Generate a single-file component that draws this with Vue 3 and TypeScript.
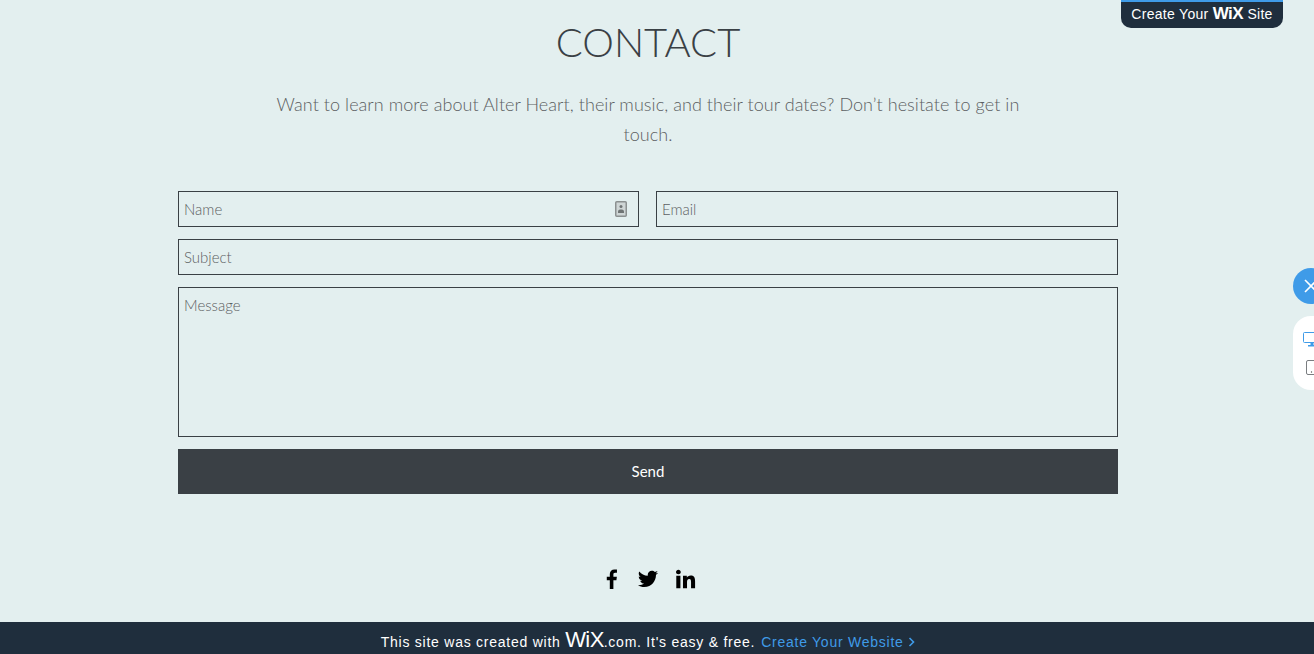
<script setup lang="ts">
const socials = ['facebook', 'twitter', 'linkedin']
</script>

<template>
  <div class="page">
    <a class="wix-tab">Create Your <b class="wix-word">WiX</b> Site</a>

    <div class="view-switch">
      <button class="close-btn" aria-label="Close">
        <svg width="18" height="18" viewBox="0 0 18 18" fill="none">
          <path d="M3 3L15 15M15 3L3 15" stroke="#fff" stroke-width="1.6" />
        </svg>
      </button>
      <div class="devices">
        <svg class="desktop" width="18" height="15" viewBox="0 0 18 15" fill="none">
          <rect x="0.5" y="0.5" width="17" height="10" rx="1" stroke="#3f9be8" />
          <path d="M5 14.5H13V13H10.5V11H7.5V13H5Z" fill="#3f9be8" />
        </svg>
        <svg class="tablet" width="14" height="15" viewBox="0 0 14 15" fill="none">
          <rect x="0.5" y="0.5" width="13" height="14" rx="1.5" stroke="#7a7d80" />
          <circle cx="5.5" cy="12" r="0.7" fill="#555" />
        </svg>
      </div>
    </div>

    <main class="content">
      <h1 class="title">CONTACT</h1>
      <p class="intro">
        Want to learn more about Alter Heart, their music, and their tour dates? Don’t hesitate to get in touch.
      </p>

      <form class="contact-form" @submit.prevent>
        <div class="row">
          <div class="name-wrap">
            <input class="field" type="text" placeholder="Name" />
            <svg class="contact-icon" width="12" height="16" viewBox="0 0 12 16" fill="none">
              <rect x="0.75" y="0.75" width="10.5" height="14.5" rx="1" fill="#cfd6d6" stroke="#8b9090" stroke-width="1.5" />
              <circle cx="6" cy="5.5" r="1.5" fill="#6f7474" />
              <path d="M3 12V10.5C3 9 4.5 8.5 6 8.5C7.5 8.5 9 9 9 10.5V12Z" fill="#6f7474" />
            </svg>
          </div>
          <input class="field" type="email" placeholder="Email" />
        </div>
        <input class="field" type="text" placeholder="Subject" />
        <textarea class="field message" placeholder="Message"></textarea>
        <button class="send" type="submit">Send</button>
      </form>

      <ul class="socials">
        <li v-for="s in socials" :key="s">
          <svg v-if="s === 'facebook'" width="22" height="22" viewBox="0 0 24 24" fill="#000">
            <path d="M14.6 23V13.4H17.9L18.4 9.5H14.6V7.1C14.6 6 15 5.2 16.5 5.2H18.5V1.7C18.1 1.6 17 1.5 15.7 1.5C12.8 1.5 10.7 3.2 10.7 6.6V9.5H7.4V13.4H10.7V23Z" />
          </svg>
          <svg v-else-if="s === 'twitter'" width="22" height="22" viewBox="0 0 24 24" fill="#000">
            <path d="M23 5.1C22.2 5.5 21.3 5.7 20.4 5.8C21.3 5.2 22 4.4 22.4 3.3C21.5 3.8 20.5 4.2 19.5 4.4C18.7 3.5 17.5 3 16.2 3C13.7 3 11.7 5 11.7 7.5C11.7 7.9 11.7 8.2 11.8 8.5C8 8.3 4.7 6.5 2.5 3.8C2.1 4.5 1.9 5.2 1.9 6.1C1.9 7.6 2.7 9 3.9 9.8C3.2 9.8 2.5 9.6 1.9 9.3V9.3C1.9 11.5 3.5 13.3 5.5 13.7C5.1 13.8 4.8 13.9 4.3 13.9C4 13.9 3.7 13.9 3.5 13.8C4.1 15.6 5.7 16.9 7.7 16.9C6.1 18.1 4.2 18.8 2.1 18.8C1.7 18.8 1.4 18.8 1 18.8C3 20.1 5.4 20.8 7.9 20.8C16.2 20.8 20.7 13.9 20.7 8V7.4C21.6 6.8 22.4 6 23 5.1Z" />
          </svg>
          <svg v-else width="22" height="22" viewBox="0 0 24 24" fill="#000">
            <path d="M2.5 8.5H7V22H2.5ZM4.8 1.8C6.2 1.8 7.4 3 7.4 4.4C7.4 5.8 6.2 6.9 4.8 6.9C3.4 6.9 2.2 5.8 2.2 4.4C2.2 3 3.4 1.8 4.8 1.8ZM9.8 8.5H14V10.4C14.7 9.2 16.1 8.1 18.2 8.1C22.5 8.1 23 11 23 14.7V22H18.6V15.6C18.6 14 18.6 12 16.6 12C14.6 12 14.2 13.6 14.2 15.5V22H9.8Z" />
          </svg>
        </li>
      </ul>
    </main>

    <footer class="wix-banner">
      <span>This site was created with <b class="wix-word big">WiX</b>.com. It's easy &amp; free.</span>
      <a class="banner-link">Create Your Website
        <svg width="7" height="10" viewBox="0 0 7 10" fill="none">
          <path d="M1.5 1L5.5 5L1.5 9" stroke="#3f9be8" stroke-width="1.6" />
        </svg>
      </a>
    </footer>
  </div>
</template>

<style scoped>
.page {
  position: relative;
  display: flex;
  flex-direction: column;
  height: 654px;
  overflow: hidden;
  background: #e3efef;
  font-family: Lato, "Liberation Sans", sans-serif;
  font-weight: 300;
  color: #3a4045;
}

.content {
  flex: 1;
  width: 940px;
  margin-left: 178px;
  display: flex;
  flex-direction: column;
  align-items: center;
}

.title {
  margin: 18px 0 0;
  font-size: 40px;
  line-height: 48px;
  font-weight: 300;
  color: #3a4045;
}

.intro {
  width: 760px;
  margin: 23px 0 0;
  font-size: 18px;
  line-height: 30px;
  letter-spacing: 0.06px;
  text-align: center;
  color: #5c6062;
}

.contact-form {
  width: 100%;
  margin-top: 42px;
  display: flex;
  flex-direction: column;
  gap: 12px;
}

.row {
  display: grid;
  grid-template-columns: 461px 462px;
  justify-content: space-between;
}

.name-wrap {
  position: relative;
  display: flex;
}

.field {
  box-sizing: border-box;
  width: 100%;
  height: 36px;
  padding: 3px 5px;
  border: 1px solid #3a4045;
  border-radius: 0;
  background: transparent;
  font-family: inherit;
  font-weight: 300;
  font-size: 15px;
  color: #3a4045;
  outline: none;
}

.field::placeholder {
  color: #5c6062;
  opacity: 1;
}

.message {
  height: 150px;
  padding-top: 8px;
  resize: none;
  display: block;
}

.contact-icon {
  position: absolute;
  right: 12px;
  top: 10px;
}

.send {
  height: 45px;
  padding: 0 0 2px;
  border: none;
  background: #3a4045;
  color: #fff;
  font-family: inherit;
  font-weight: 400;
  font-size: 15px;
  cursor: pointer;
}

.socials {
  list-style: none;
  display: flex;
  gap: 15px;
  margin: 74px 0 0;
  padding: 0;
}

.socials li {
  display: flex;
}

.wix-banner {
  height: 32px;
  flex-shrink: 0;
  display: flex;
  justify-content: center;
  align-items: center;
  gap: 6px;
  padding: 8px 18px 0 0;
  box-sizing: border-box;
  background: #1f2e3d;
  color: #fff;
  font-family: "Liberation Sans", Arial, sans-serif;
  font-weight: 400;
  font-size: 14px;
  line-height: 24px;
  letter-spacing: 0.75px;
}

.banner-link {
  color: #3f9be8;
}

.wix-word {
  font-family: "Liberation Sans", Arial, sans-serif;
  font-weight: 700;
  font-size: 17px;
  line-height: 0;
  letter-spacing: -0.5px;
}

.wix-word.big {
  font-size: 22px;
  font-weight: 400;
  letter-spacing: -0.6px;
}

.wix-tab {
  position: absolute;
  top: 0;
  left: 1121px;
  width: 162px;
  height: 28px;
  box-sizing: border-box;
  border-top: 2px solid #3f9be8;
  border-radius: 0 0 10px 10px;
  background: #1f2e3d;
  color: #fff;
  font-family: "Liberation Sans", Arial, sans-serif;
  font-weight: 400;
  font-size: 14px;
  letter-spacing: 0.3px;
  line-height: 24px;
  text-align: center;
}

.view-switch {
  position: absolute;
  top: 268px;
  right: -22px;
  width: 43px;
  display: flex;
  flex-direction: column;
  gap: 12px;
}

.close-btn {
  width: 36px;
  height: 36px;
  padding: 0;
  border: none;
  border-radius: 50%;
  background: #3f9be8;
  display: flex;
  align-items: center;
  justify-content: center;
}

.devices {
  width: 43px;
  height: 74px;
  box-sizing: border-box;
  padding-top: 16px;
  border-radius: 18px 0 0 18px;
  background: #fff;
  display: flex;
  flex-direction: column;
  gap: 13px;
}

.desktop {
  margin-left: 10px;
}

.tablet {
  margin-left: 13px;
}
</style>
